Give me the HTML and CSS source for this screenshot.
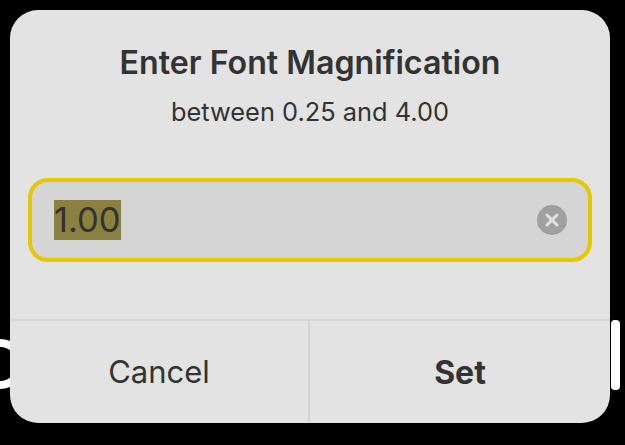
FILE: index.html
```html
<!DOCTYPE html>
<html lang="en">
<head>
  <meta charset="UTF-8">
  <title>Enter Font Magnification</title>
  <link rel="stylesheet" href="styles.css">
</head>
<body>
  <div class="backdrop-ring"></div>
  <div class="backdrop-pill"></div>

  <div class="dialog">
    <div class="header">
      <div class="title">Enter Font Magnification</div>
      <div class="message">between 0.25 and 4.00</div>
    </div>

    <div class="field">
      <span class="value">1.00</span>
      <svg class="clear" viewBox="0 0 30 30" width="30" height="30">
        <circle cx="15" cy="15" r="15" fill="#a0a0a0"/>
        <path d="M10 10 L20 20 M20 10 L10 20" stroke="#e4e4e4" stroke-width="3" stroke-linecap="round"/>
      </svg>
    </div>

    <div class="actions">
      <div class="action">Cancel</div>
      <div class="action primary">Set</div>
    </div>
  </div>
</body>
</html>
```

FILE: styles.css
```css
html, body {
  margin: 0;
  height: 100%;
}

body {
  position: relative;
  width: 625px;
  height: 445px;
  overflow: hidden;
  background: #000;
  font-family: Inter, "Noto Sans", sans-serif;
  color: #333;
}

/* bits of the screen behind the dialog */
.backdrop-ring {
  position: absolute;
  left: -25px;
  top: 339px;
  width: 34px;
  height: 34px;
  border: 8px solid #fff;
  border-radius: 50%;
}

.backdrop-pill {
  position: absolute;
  left: 611px;
  top: 320px;
  width: 9px;
  height: 70px;
  background: #fff;
  border-radius: 4px;
}

.dialog {
  position: absolute;
  left: 10px;
  top: 10px;
  width: 600px;
  height: 413px;
  display: flex;
  flex-direction: column;
  background: #e3e3e3;
  border-radius: 28px;
  overflow: hidden;
}

.header {
  padding-top: 34px;
  text-align: center;
}

.title {
  font-size: 32.2px;
  line-height: 38px;
  font-weight: 600;
}

.message {
  margin-top: 15px;
  font-size: 25.4px;
  line-height: 30px;
}

.field {
  display: flex;
  align-items: center;
  justify-content: space-between;
  height: 76px;
  margin: 51px 18px 0;
  padding: 0 21px 0 22px;
  background: #d5d5d5;
  border: 4px solid #e6c700;
  border-radius: 20px;
}

.value {
  font-size: 34.5px;
  line-height: 40px;
  background: #8a8140;
}

.clear {
  display: block;
}

.actions {
  display: grid;
  grid-template-columns: 298px 1fr;
  margin-top: auto;
  height: 100px;
  padding-bottom: 2px;
  border-top: 2px solid #d4d4d4;
}

.action {
  display: flex;
  align-items: center;
  justify-content: center;
  font-size: 31px;
}

.action + .action {
  margin-bottom: -2px;
  border-left: 2px solid #d4d4d4;
}

.primary {
  font-size: 32px;
  font-weight: 700;
}
```
